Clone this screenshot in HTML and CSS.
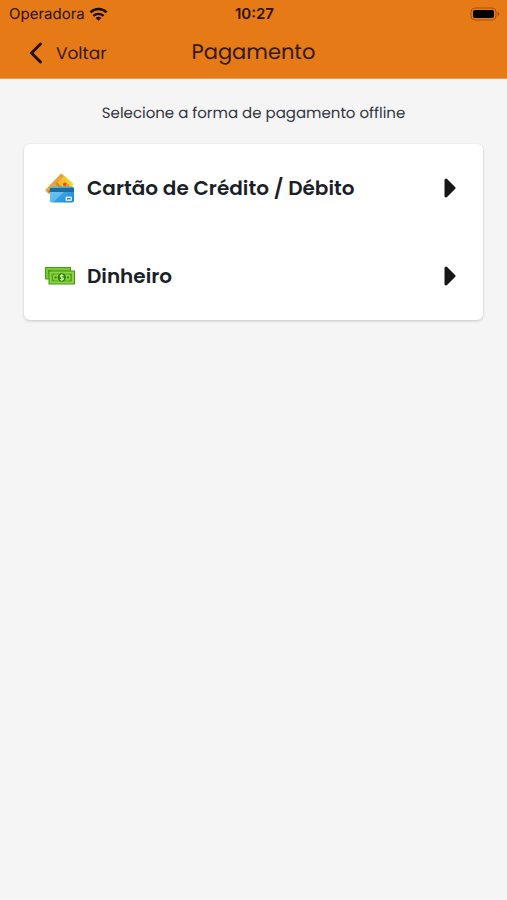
FILE: index.html
```
<!DOCTYPE html>
<html lang="pt-BR">
  <head>
    <meta charset="UTF-8" />
    <meta name="viewport" content="width=device-width, initial-scale=1" />
    <title>Pagamento</title>
    <link rel="stylesheet" href="styles.css">
  </head>
  <body>
    <header class="header">
      <div class="status-bar">
        <div class="carrier">
          <span>Operadora</span>
          <svg class="wifi" viewBox="0 0 20 14" aria-hidden="true">
            <path d="M1.500 5.200a12.300 12.300 0 0 1 17 0M4.600 9a8 8 0 0 1 10.800 0" />
            <path class="wifi-dot" d="M7 11.300a4.600 4.600 0 0 1 6 0L10 14z" />
          </svg>
        </div>
        <span class="time">10:27</span>
        <svg class="battery" viewBox="0 0 30 14" aria-hidden="true">
          <rect class="battery-case" x="1" y="1" width="25" height="12" rx="4" />
          <rect x="3" y="3" width="21" height="8" rx="2" />
          <path class="battery-tip" d="M27.500 5v4q2-.6 2-2t-2-2z" />
        </svg>
      </div>
      <div class="navbar">
        <a href="#" class="back">
          <svg viewBox="0 0 14 22" aria-hidden="true">
            <path d="M11.500 2 2.500 11l9 9" />
          </svg>
          <span>Voltar</span>
        </a>
        <h1>Pagamento</h1>
      </div>
    </header>

    <main class="content">
      <p class="hint">Selecione a forma de pagamento offline</p>

      <div class="options">
        <button type="button" class="option">
          <svg class="option-icon" viewBox="0 0 30 30" aria-hidden="true">
            <defs>
              <linearGradient id="gold" x1="0" y1="0" x2="1" y2="0">
                <stop offset="0" stop-color="#e9a13b" />
                <stop offset="1" stop-color="#ffda24" />
              </linearGradient>
              <linearGradient id="blue" x1="0" y1="0" x2="1" y2="1">
                <stop offset="0" stop-color="#58b9ee" />
                <stop offset="1" stop-color="#168bd2" />
              </linearGradient>
            </defs>
            <path fill="#e8a13d" d="M.7 16.500 15.300 1.200q1-1 2 0l4 4L5 20.500q-1 .8-1.700 0L.7 18q-.6-.7 0-1.500z" />
            <path fill="#a96b2d" d="m3 18.500 15-14 1.500 1.500L5 20z" />
            <path fill="url(#gold)" d="M5 16 18.500 3.500q1-.8 1.800 0L28 10.500q.8 1-.2 1.800L22 18H6z" />
            <path fill="#d88b18" d="m10 11 2-2 5 5h-4z" />
            <circle cx="20" cy="11.500" r="2" fill="#e94d24" />
            <circle cx="22.500" cy="12.500" r="1.800" fill="#f39a20" />
            <rect x="5" y="13.500" width="24" height="16" rx="2" fill="url(#blue)" />
            <path fill="#1c6d9d" d="M5 15h24v4H5z" />
            <path fill="#8bd2f7" opacity=".5" d="M5 19h14L8 29.500H7q-2 0-2-2z" />
            <rect x="20.500" y="23.500" width="6.500" height="4.500" rx="1" fill="#d6e5ec" />
            <path fill="#8a6ea4" d="M22 25h3.500v1.500H22z" />
          </svg>
          <span class="option-name">Cartão de Crédito / Débito</span>
          <svg class="arrow" viewBox="0 0 12 20" aria-hidden="true">
            <path d="M2 2v16l8-8z" />
          </svg>
        </button>
        <button type="button" class="option">
          <svg class="option-icon" viewBox="0 0 30 30" aria-hidden="true">
            <rect x="0" y="6" width="26" height="12.500" fill="#4a9d16" />
            <rect x="1" y="7" width="24" height="10.500" fill="#79c932" />
            <path fill="#4a9d16" d="M3 9h4l-4 4z" />
            <rect x="3.500" y="9.500" width="26.500" height="14" fill="#3f9412" />
            <rect x="4.500" y="10.500" width="24.500" height="12" fill="#8ed442" />
            <path fill="#55a51c" d="M6.500 12.500h20.500v8H6.500zm3 1L8 15v3l1.500 1.500h14.500l1.500-1.500v-3L24 13.500z" />
            <circle cx="10.500" cy="16.500" r="1.200" fill="#3f9412" />
            <circle cx="23" cy="16.500" r="1.200" fill="#3f9412" />
            <circle cx="16.800" cy="16.500" r="4.200" fill="#327f12" />
            <path fill="none" stroke="#c9ef9b" stroke-width="1.200" d="M18.500 14.800q-3-1.300-3.200.3c0 1.500 3.200 1.200 3.200 2.700q-.4 1.600-3.300.4M16.800 13v7" />
          </svg>
          <span class="option-name">Dinheiro</span>
          <svg class="arrow" viewBox="0 0 12 20" aria-hidden="true">
            <path d="M2 2v16l8-8z" />
          </svg>
        </button>
      </div>
    </main>
  </body>
</html>
```

FILE: styles.css
```
* {
  margin: 0;
  padding: 0;
  box-sizing: border-box;
}

body {
  min-height: 100vh;
  font-family: Poppins, Inter, sans-serif;
  text-rendering: geometricPrecision;
  background: #f5f5f5;
  color: #1b1f29;
}

.header {
  background: #e67a17;
  color: #32190a;
  border-bottom: 1px solid #eb9a50;
}

.status-bar {
  display: grid;
  grid-template-columns: 1fr auto 1fr;
  align-items: center;
  height: 27px;
  padding: 0 7px 0 9px;
  font-family: Inter, sans-serif;
  font-size: 15px;
  color: #2b1404;
}

.carrier {
  display: flex;
  align-items: center;
  gap: 4px;
}

.wifi {
  width: 19px;
  height: 14px;
  fill: none;
  stroke: #1c0d02;
  stroke-width: 2.5;
}

.wifi-dot {
  fill: #1c0d02;
  stroke: none;
}

.time {
  font-weight: 600;
}

.battery {
  width: 30px;
  height: 14px;
  justify-self: end;
}

.battery-case {
  fill: none;
  stroke: #a3550f;
}

.battery-tip {
  fill: #a3550f;
}

.navbar {
  display: grid;
  grid-template-columns: 1fr auto 1fr;
  align-items: center;
  height: 51px;
  padding: 0 28px;
}

.navbar h1 {
  font-size: 21px;
  font-weight: 400;
  line-height: 28px;
}

.back {
  display: flex;
  align-items: center;
  gap: 12px;
  color: inherit;
  font-size: 17px;
  text-decoration: none;
}

.back svg {
  width: 16px;
  height: 22px;
  fill: none;
  stroke: #241205;
  stroke-width: 3;
  stroke-linecap: round;
  stroke-linejoin: round;
}

.content {
  padding: 24px;
}

.hint {
  margin-bottom: 19px;
  font-size: 15px;
  line-height: 22px;
  text-align: center;
  color: #343740;
}

.options {
  background: #fff;
  border-radius: 6px;
  box-shadow: 0 1px 3px rgba(0, 0, 0, 0.2);
}

.option {
  display: flex;
  align-items: center;
  gap: 12px;
  width: 100%;
  height: 88px;
  padding: 0 27px 0 21px;
  border: none;
  background: none;
  font: inherit;
  color: inherit;
  text-align: left;
  cursor: pointer;
}

.option-icon {
  flex: none;
  width: 30px;
  height: 30px;
}

.option-name {
  flex: 1;
  font-size: 20px;
  font-weight: 600;
}

.arrow {
  width: 12px;
  height: 20px;
  fill: #171717;
  stroke: #171717;
  stroke-width: 3;
  stroke-linejoin: round;
}
```
